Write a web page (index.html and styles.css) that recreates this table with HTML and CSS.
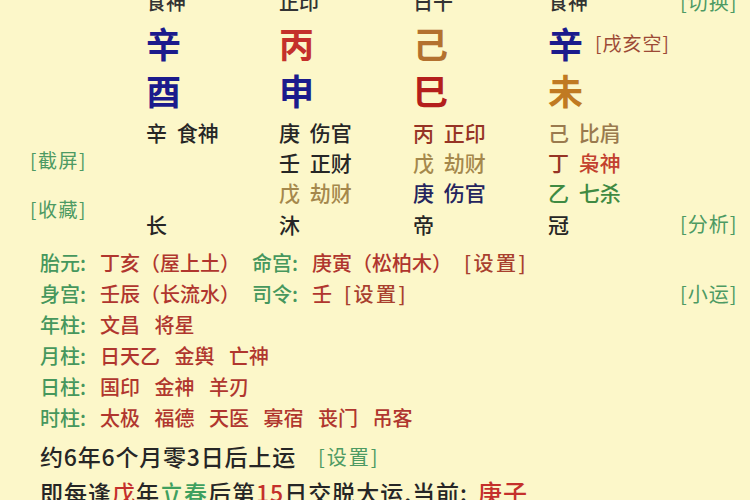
FILE: index.html
```html
<!DOCTYPE html>
<html lang="zh-CN">
<head>
<meta charset="utf-8">
<link rel="stylesheet" href="styles.css">
</head>
<body>
<div class="page">
  <div class="pillars">
    <div></div>
    <div class="hdr">食神</div>
    <div class="hdr">正印</div>
    <div class="hdr">日干</div>
    <div class="hdr">食神</div>
    <div class="side">[切换]</div>

    <div></div>
    <div class="big navy">辛</div>
    <div class="big red">丙</div>
    <div class="big brown">己</div>
    <div class="big navy">辛<span class="kong">[戌亥空]</span></div>
    <div></div>

    <div></div>
    <div class="big navy">酉</div>
    <div class="big navy">申</div>
    <div class="big dred">巳</div>
    <div class="big orange">未</div>
    <div></div>

    <div></div>
    <div class="sm dark">辛 食神</div>
    <div class="sm dark">庚 伤官</div>
    <div class="sm maroon">丙 正印</div>
    <div class="sm khaki">己 比肩</div>
    <div></div>

    <div class="gut up">[截屏]</div>
    <div></div>
    <div class="sm dark">壬 正财</div>
    <div class="sm tan">戊 劫财</div>
    <div class="sm"><span class="maroon">丁</span> <span class="red2">枭神</span></div>
    <div></div>

    <div class="gut span2">[收藏]</div>
    <div></div>
    <div class="sm tan">戊 劫财</div>
    <div class="sm navy2">庚 伤官</div>
    <div class="sm green2">乙 七杀</div>
    <div></div>

    <div class="sm dark">长</div>
    <div class="sm dark">沐</div>
    <div class="sm dark">帝</div>
    <div class="sm dark">冠</div>
    <div class="side">[分析]</div>
  </div>

  <div class="info">
    <div class="line"><span class="lbl">胎元:</span><span class="val">丁亥（屋上土）</span><span class="lbl">命宫:</span><span class="val">庚寅（松柏木）</span><span class="btn">[设置]</span></div>
    <div class="line"><span class="lbl">身宫:</span><span class="val">壬辰（长流水）</span><span class="lbl">司令:</span><span class="val">壬</span><span class="btn">[设置]</span><span class="side right">[小运]</span></div>
    <div class="line"><span class="lbl">年柱:</span><span class="val">文昌 将星</span></div>
    <div class="line"><span class="lbl">月柱:</span><span class="val">日天乙 金舆 亡神</span></div>
    <div class="line"><span class="lbl">日柱:</span><span class="val">国印 金神 羊刃</span></div>
    <div class="line"><span class="lbl">时柱:</span><span class="val">太极 福德 天医 寡宿 丧门 吊客</span></div>
    <div class="line big-line first">约6年6个月零3日后上运<span class="set">[设置]</span></div>
    <div class="line big-line last">即每逢<span class="hl-red">戊</span>年<span class="hl-green">立春</span>后第<span class="hl-red">15</span>日交脱大运,当前:<span class="cur">庚子</span></div>
  </div>
</div>
</body>
</html>
```

FILE: styles.css
```css
html, body {
  margin: 0;
  padding: 0;
}
body {
  width: 750px;
  height: 500px;
  overflow: hidden;
  background: #fcf7c9;
  font-family: "Noto Sans CJK SC", "Noto Sans", sans-serif;
  color: #2a2a2a;
}
.page {
  width: 750px;
}
.pillars {
  display: grid;
  grid-template-columns: 146px 133px 134px 135px 132px 70px;
  grid-template-rows: 42px 44px 50px 30px 30px 30px 34px;
  margin-top: -19px;
  align-items: center;
}
.pillars > div {
  white-space: nowrap;
  line-height: 1;
}
.hdr {
  font-size: 20px;
  color: #333;
  font-weight: 500;
}
.side {
  font-size: 20px;
  color: #4d9a63;
  letter-spacing: 1px;
}
.gut {
  font-size: 19px;
  color: #4d9a63;
  padding-left: 30px;
  letter-spacing: 1.5px;
}
.up {
  margin-bottom: 6px;
}
.span2 {
  grid-row: span 2;
  padding-bottom: 2px;
}
.big {
  font-size: 35px;
  font-weight: 700;
  display: flex;
  align-items: center;
  margin-bottom: 5px;
}
.kong {
  font-size: 19px;
  font-weight: 400;
  color: #9c4a36;
  margin-left: 12px;
  letter-spacing: 1px;
}
.sm {
  font-size: 21px;
  word-spacing: 5px;
  font-weight: 500;
}
.navy { color: #1b1b8c; }
.red { color: #c4302b; }
.brown { color: #b3712f; }
.dred { color: #b41f1c; }
.orange { color: #c07a22; }
.dark { color: #262626; }
.maroon { color: #963425; }
.khaki { color: #9a7a4e; }
.tan { color: #a5884c; }
.red2 { color: #c2402e; }
.navy2 { color: #24245e; }
.green2 { color: #3f8a42; }

.info {
  padding-left: 40px;
  margin-top: 6px;
}
.line {
  height: 31px;
  display: flex;
  align-items: center;
  font-size: 20px;
  font-weight: 500;
  white-space: nowrap;
  color: #b0362e;
}
.lbl {
  color: #46975d;
  margin-right: 14px;
}
.val {
  word-spacing: 10px;
  margin-right: 12px;
}
.btn {
  letter-spacing: 2.5px;
  color: #a8402e;
}
.right {
  margin-left: auto;
  width: 70px;
  font-weight: 400;
}
.big-line {
  font-size: 23px;
  color: #262626;
  height: 37px;
}
.first {
  margin-top: 6px;
  height: 34px;
  letter-spacing: 0.8px;
}
.last {
  letter-spacing: 1px;
}
.set {
  font-size: 20px;
  font-weight: 400;
  color: #4d9a63;
  margin-left: 22px;
  letter-spacing: 2px;
}
.hl-red { color: #c4302b; }
.hl-green { color: #3fa05e; }
.cur {
  color: #c4302b;
  font-size: 24px;
  margin-left: 10px;
}
```
